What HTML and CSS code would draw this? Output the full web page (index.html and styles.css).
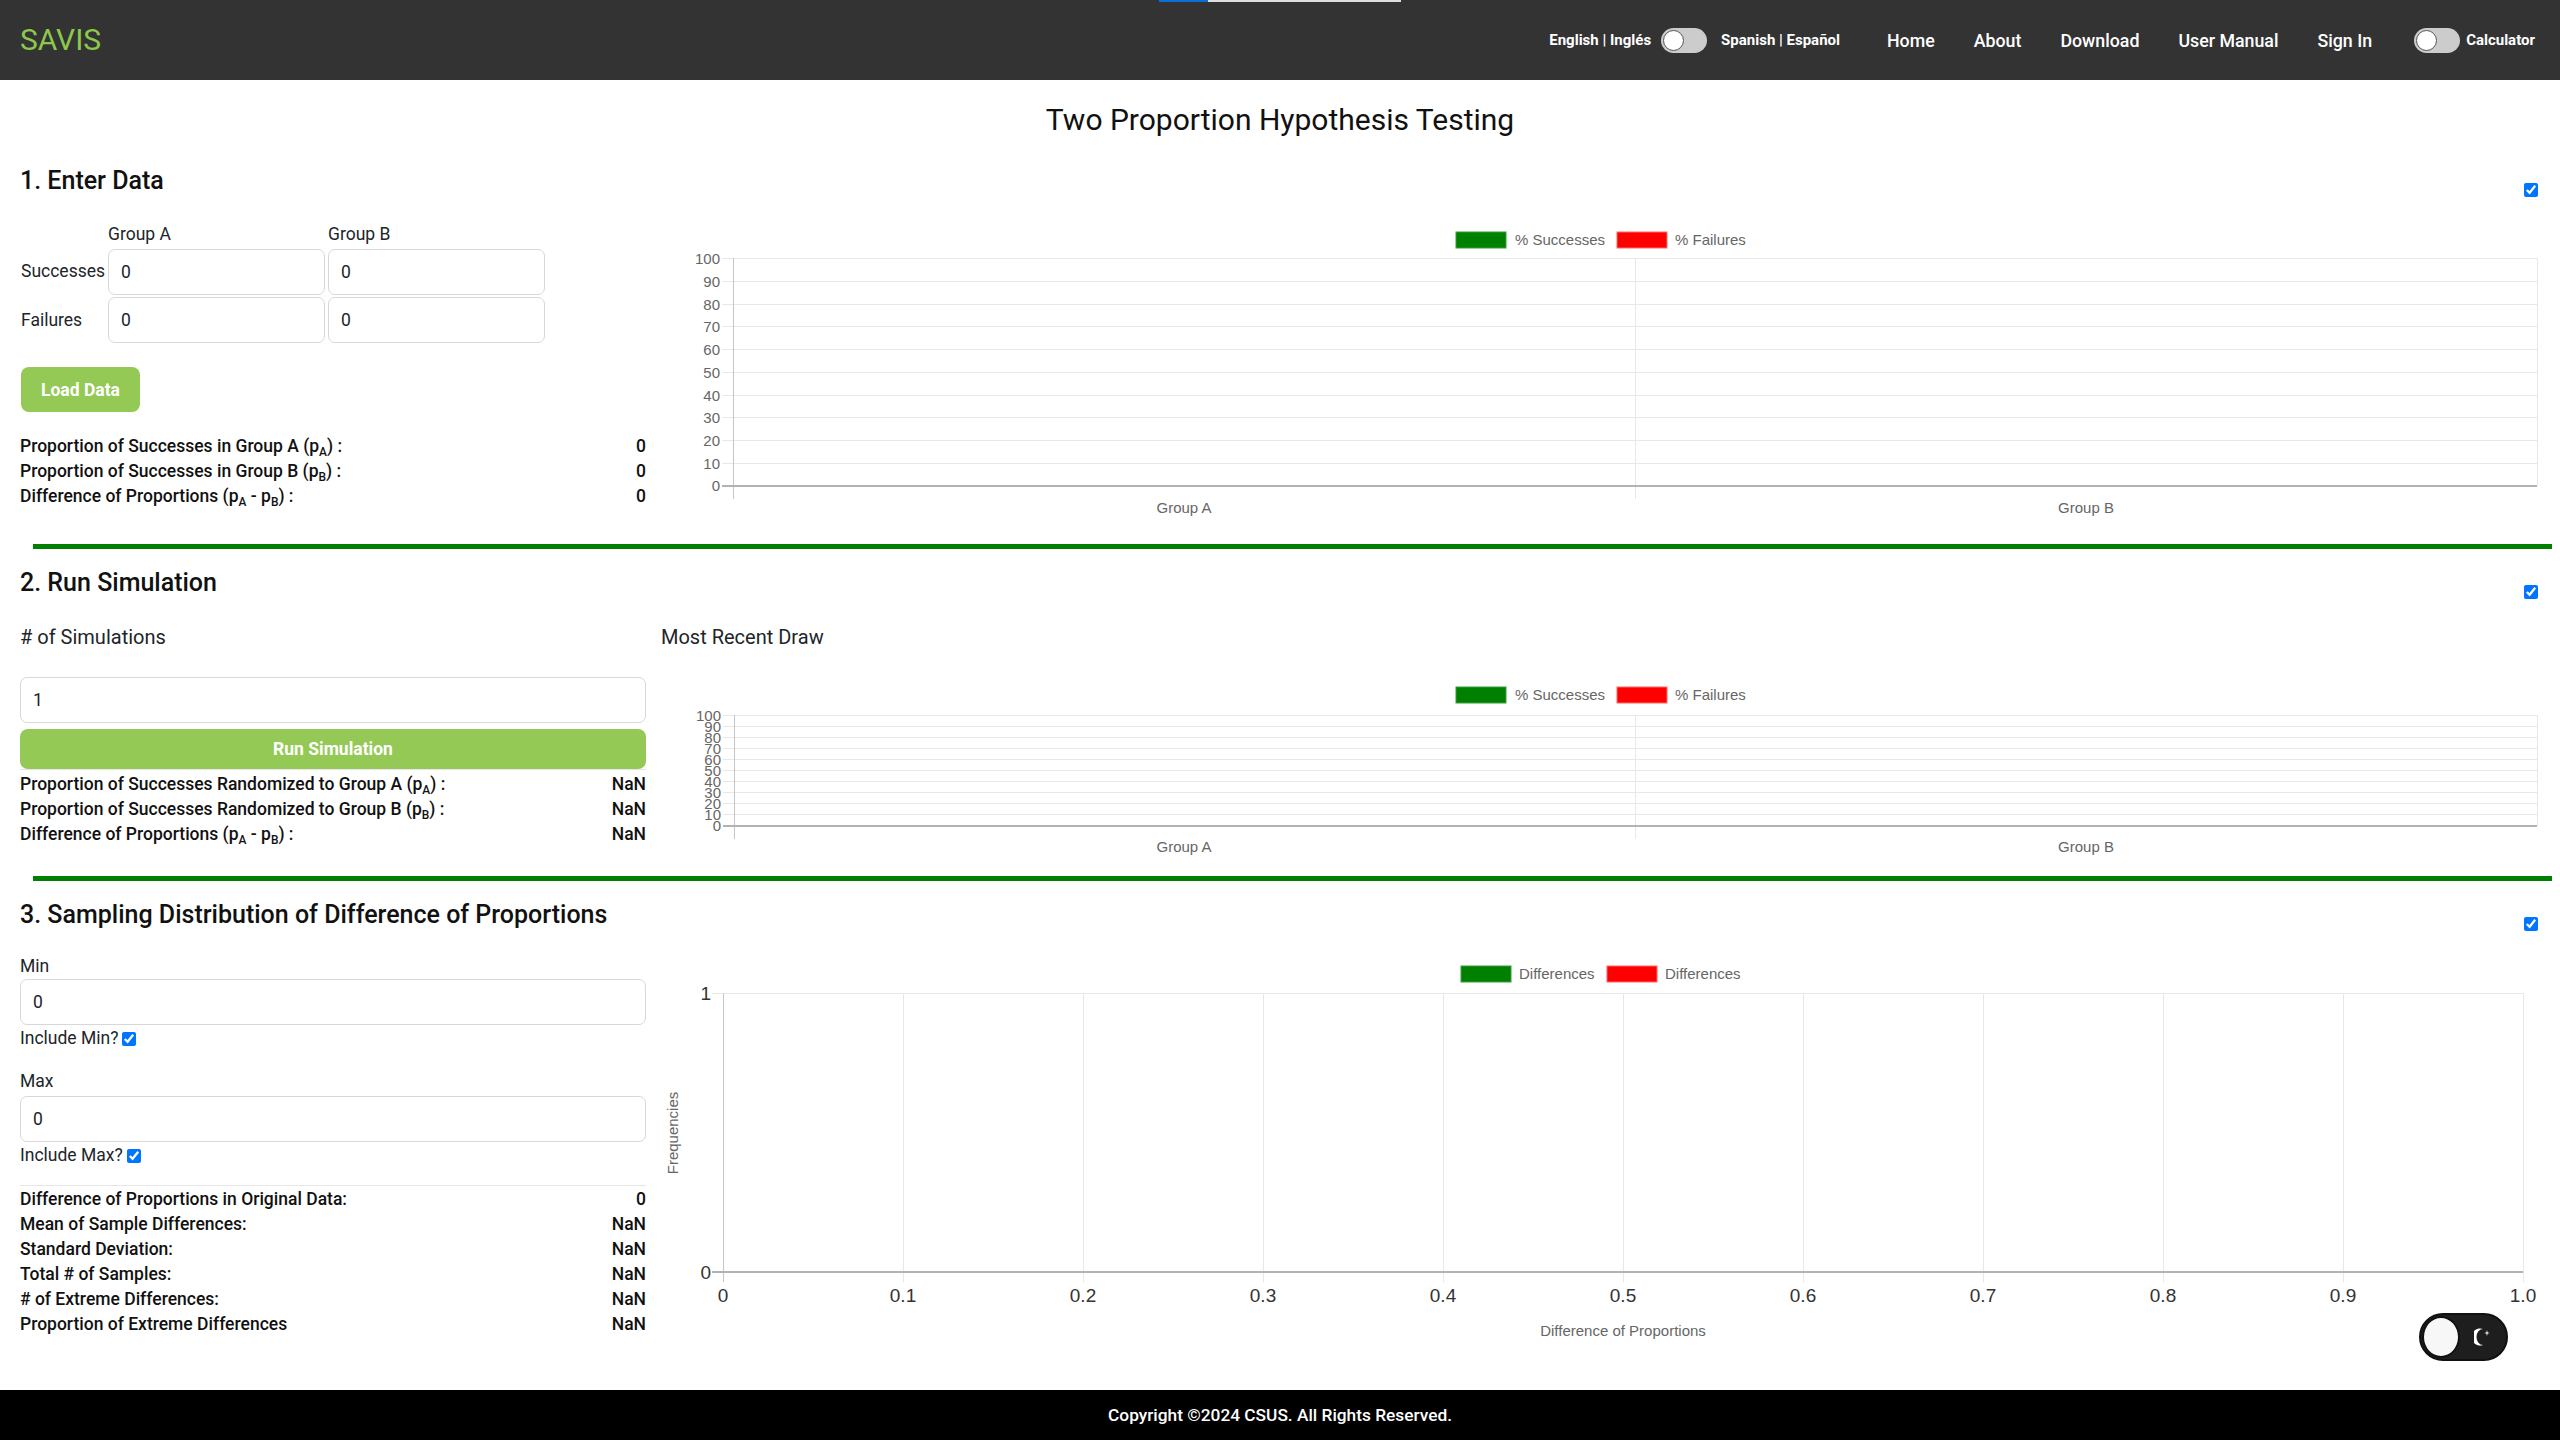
FILE: index.html
```html
<!DOCTYPE html>
<html lang="en">
<head>
<meta charset="utf-8">
<title>SAVIS - Two Proportion Hypothesis Testing</title>
<link rel="stylesheet" href="styles.css">
</head>
<body>
<div class="progress"><span class="progress-fill"></span></div>
<header class="navbar">
  <a class="brand" href="#">SAVIS</a>
  <nav class="nav">
    <span class="lang">English | Inglés</span>
    <span class="switch"><span class="knob"></span></span>
    <span class="lang lang-es">Spanish | Español</span>
    <a class="nav-link nav-link-first" href="#">Home</a>
    <a class="nav-link" href="#">About</a>
    <a class="nav-link" href="#">Download</a>
    <a class="nav-link" href="#">User Manual</a>
    <a class="nav-link" href="#">Sign In</a>
    <span class="switch switch-calc"><span class="knob"></span></span>
    <span class="lang calc">Calculator</span>
  </nav>
</header>

<main class="main">
  <h1 class="page-title">Two Proportion Hypothesis Testing</h1>

  <section class="section s1">
    <div class="section-head">
      <h2>1. Enter Data</h2>
      <input type="checkbox" class="check head-check" checked>
    </div>
    <div class="section-body">
      <div class="left">
        <div class="data-grid">
          <span></span>
          <span class="col-label">Group A</span>
          <span class="col-label">Group B</span>
          <span class="row-label">Successes</span>
          <input class="field" value="0">
          <input class="field" value="0">
          <span class="row-label">Failures</span>
          <input class="field" value="0">
          <input class="field" value="0">
        </div>
        <button class="btn btn-load">Load Data</button>
        <div class="stats stats-1">
          <div class="stat"><span>Proportion of Successes in Group A (p<sub>A</sub>) :</span><span>0</span></div>
          <div class="stat"><span>Proportion of Successes in Group B (p<sub>B</sub>) :</span><span>0</span></div>
          <div class="stat"><span>Difference of Proportions (p<sub>A</sub> - p<sub>B</sub>) :</span><span>0</span></div>
        </div>
      </div>
      <div class="right">
        <svg class="chart" width="1880" height="300" viewBox="0 0 1880 300">
          <rect class="lg-green" x="796" y="8" width="50" height="16"/>
          <text class="lg-text" x="855" y="21">% Successes</text>
          <rect class="lg-red" x="957" y="8" width="50" height="16"/>
          <text class="lg-text" x="1015" y="21">% Failures</text>
          <g class="grid">
            <line x1="62" y1="34.5" x2="1877" y2="34.5"/>
            <line x1="62" y1="57.5" x2="1877" y2="57.5"/>
            <line x1="62" y1="80.5" x2="1877" y2="80.5"/>
            <line x1="62" y1="102.5" x2="1877" y2="102.5"/>
            <line x1="62" y1="125.5" x2="1877" y2="125.5"/>
            <line x1="62" y1="148.5" x2="1877" y2="148.5"/>
            <line x1="62" y1="171.5" x2="1877" y2="171.5"/>
            <line x1="62" y1="193.5" x2="1877" y2="193.5"/>
            <line x1="62" y1="216.5" x2="1877" y2="216.5"/>
            <line x1="62" y1="239.5" x2="1877" y2="239.5"/>
            <line x1="975.5" y1="34" x2="975.5" y2="275"/>
            <line x1="1877.5" y1="34" x2="1877.5" y2="262"/>
          </g>
          <line class="axis" x1="73.5" y1="34" x2="73.5" y2="275"/>
          <line class="zero" x1="62" y1="262" x2="1877" y2="262"/>
          <g class="tick-label" text-anchor="end">
            <text x="60" y="39.5">100</text>
            <text x="60" y="62.5">90</text>
            <text x="60" y="85.5">80</text>
            <text x="60" y="107.5">70</text>
            <text x="60" y="130.5">60</text>
            <text x="60" y="153.5">50</text>
            <text x="60" y="176.5">40</text>
            <text x="60" y="198.5">30</text>
            <text x="60" y="221.5">20</text>
            <text x="60" y="244.5">10</text>
            <text x="60" y="267">0</text>
          </g>
          <g class="tick-label" text-anchor="middle">
            <text x="524" y="289">Group A</text>
            <text x="1426" y="289">Group B</text>
          </g>
        </svg>
      </div>
    </div>
  </section>

  <hr class="divider divider-1">

  <section class="section s2">
    <div class="section-head">
      <h2>2. Run Simulation</h2>
      <input type="checkbox" class="check head-check" checked>
    </div>
    <div class="section-body">
      <div class="left">
        <div class="label label-lg">&#35; of Simulations</div>
        <input class="field field-sims" value="1">
        <button class="btn btn-run">Run Simulation</button>
        <div class="rule"></div>
        <div class="stats stats-2">
          <div class="stat"><span>Proportion of Successes Randomized to Group A (p<sub>A</sub>) :</span><span>NaN</span></div>
          <div class="stat"><span>Proportion of Successes Randomized to Group B (p<sub>B</sub>) :</span><span>NaN</span></div>
          <div class="stat"><span>Difference of Proportions (p<sub>A</sub> - p<sub>B</sub>) :</span><span>NaN</span></div>
        </div>
      </div>
      <div class="right">
        <div class="label label-lg label-draw">Most Recent Draw</div>
        <svg class="chart chart-2" width="1880" height="185" viewBox="0 0 1880 185">
          <rect class="lg-green" x="796" y="12" width="50" height="16"/>
          <text class="lg-text" x="855" y="25">% Successes</text>
          <rect class="lg-red" x="957" y="12" width="50" height="16"/>
          <text class="lg-text" x="1015" y="25">% Failures</text>
          <g class="grid">
            <line x1="63" y1="40.5" x2="1877" y2="40.5"/>
            <line x1="63" y1="51.5" x2="1877" y2="51.5"/>
            <line x1="63" y1="62.5" x2="1877" y2="62.5"/>
            <line x1="63" y1="73.5" x2="1877" y2="73.5"/>
            <line x1="63" y1="84.5" x2="1877" y2="84.5"/>
            <line x1="63" y1="95.5" x2="1877" y2="95.5"/>
            <line x1="63" y1="106.5" x2="1877" y2="106.5"/>
            <line x1="63" y1="117.5" x2="1877" y2="117.5"/>
            <line x1="63" y1="128.5" x2="1877" y2="128.5"/>
            <line x1="63" y1="139.5" x2="1877" y2="139.5"/>
            <line x1="975.5" y1="40" x2="975.5" y2="164"/>
            <line x1="1877.5" y1="40" x2="1877.5" y2="151"/>
          </g>
          <line class="axis" x1="74.5" y1="40" x2="74.5" y2="164"/>
          <line class="zero" x1="63" y1="151" x2="1877" y2="151"/>
          <g class="tick-label" text-anchor="end">
            <text x="61" y="45.5">100</text>
            <text x="61" y="56.5">90</text>
            <text x="61" y="67.5">80</text>
            <text x="61" y="78.5">70</text>
            <text x="61" y="89.5">60</text>
            <text x="61" y="100.5">50</text>
            <text x="61" y="111.5">40</text>
            <text x="61" y="122.5">30</text>
            <text x="61" y="133.5">20</text>
            <text x="61" y="144.5">10</text>
            <text x="61" y="156">0</text>
          </g>
          <g class="tick-label" text-anchor="middle">
            <text x="524" y="177">Group A</text>
            <text x="1426" y="177">Group B</text>
          </g>
        </svg>
      </div>
    </div>
  </section>

  <hr class="divider divider-2">

  <section class="section s3">
    <div class="section-head">
      <h2>3. Sampling Distribution of Difference of Proportions</h2>
      <input type="checkbox" class="check head-check" checked>
    </div>
    <div class="section-body">
      <div class="left">
        <div class="label">Min</div>
        <input class="field field-min" value="0">
        <label class="inc inc-min">Include Min? <input type="checkbox" class="check" checked></label>
        <div class="label label-max">Max</div>
        <input class="field field-max" value="0">
        <label class="inc">Include Max? <input type="checkbox" class="check" checked></label>
        <div class="rule rule-3"></div>
        <div class="stats stats-3">
          <div class="stat"><span>Difference of Proportions in Original Data:</span><span>0</span></div>
          <div class="stat"><span>Mean of Sample Differences:</span><span>NaN</span></div>
          <div class="stat"><span>Standard Deviation:</span><span>NaN</span></div>
          <div class="stat"><span>Total &#35; of Samples:</span><span>NaN</span></div>
          <div class="stat"><span>&#35; of Extreme Differences:</span><span>NaN</span></div>
          <div class="stat"><span>Proportion of Extreme Differences</span><span>NaN</span></div>
        </div>
      </div>
      <div class="right">
        <svg class="chart" width="1880" height="390" viewBox="0 0 1880 390">
          <rect class="lg-green" x="801" y="10" width="50" height="16"/>
          <text class="lg-text" x="859" y="23">Differences</text>
          <rect class="lg-red" x="947" y="10" width="50" height="16"/>
          <text class="lg-text" x="1005" y="23">Differences</text>
          <g class="grid">
            <line x1="52" y1="37.5" x2="1863" y2="37.5"/>
            <line x1="243.5" y1="37" x2="243.5" y2="326"/>
            <line x1="423.5" y1="37" x2="423.5" y2="326"/>
            <line x1="603.5" y1="37" x2="603.5" y2="326"/>
            <line x1="783.5" y1="37" x2="783.5" y2="326"/>
            <line x1="963.5" y1="37" x2="963.5" y2="326"/>
            <line x1="1143.5" y1="37" x2="1143.5" y2="326"/>
            <line x1="1323.5" y1="37" x2="1323.5" y2="326"/>
            <line x1="1503.5" y1="37" x2="1503.5" y2="326"/>
            <line x1="1683.5" y1="37" x2="1683.5" y2="326"/>
            <line x1="1863.5" y1="37" x2="1863.5" y2="326"/>
          </g>
          <line class="axis" x1="63.5" y1="37" x2="63.5" y2="326"/>
          <line class="zero" x1="52" y1="316" x2="1863" y2="316"/>
          <g class="tick-big" text-anchor="end">
            <text x="51" y="44">1</text>
            <text x="51" y="323">0</text>
          </g>
          <g class="tick-big" text-anchor="middle">
            <text x="63" y="346">0</text>
            <text x="243" y="346">0.1</text>
            <text x="423" y="346">0.2</text>
            <text x="603" y="346">0.3</text>
            <text x="783" y="346">0.4</text>
            <text x="963" y="346">0.5</text>
            <text x="1143" y="346">0.6</text>
            <text x="1323" y="346">0.7</text>
            <text x="1503" y="346">0.8</text>
            <text x="1683" y="346">0.9</text>
            <text x="1863" y="346">1.0</text>
          </g>
          <text class="tick-label" text-anchor="middle" transform="translate(18 177) rotate(-90)">Frequencies</text>
          <text class="tick-label" text-anchor="middle" x="963" y="380">Difference of Proportions</text>
        </svg>
      </div>
    </div>
  </section>
</main>

<footer class="footer">Copyright ©2024 CSUS. All Rights Reserved.</footer>

<div class="theme-toggle">
  <span class="theme-knob"></span>
  <svg class="moon" width="16" height="22" viewBox="0 0 16 22">
    <path d="M9 3 A8.5 8.5 0 1 0 9 19 A6.5 8 0 0 1 9 3 Z" fill="#fff"/>
    <path d="M13 4 L13.6 6.4 L16 7 L13.6 7.6 L13 10 L12.4 7.6 L10 7 L12.4 6.4 Z" fill="#fff"/>
  </svg>
</div>
</body>
</html>
```

FILE: styles.css
```css
* { box-sizing: border-box; }

html, body { margin: 0; padding: 0; }

body {
  font-family: Roboto, "Noto Sans", "Liberation Sans", Arial, sans-serif;
  font-size: 17.5px;
  line-height: 21px;
  color: #212529;
  background: #fff;
  min-height: 100vh;
  display: flex;
  flex-direction: column;
}

/* top loading indicator over the navbar */
.progress {
  position: absolute;
  top: 0;
  left: 1159px;
  width: 242px;
  height: 2px;
  background: #dedede;
  z-index: 5;
}
.progress-fill {
  display: block;
  width: 49px;
  height: 100%;
  background: #0b6fd6;
}

/* navbar */
.navbar {
  flex: none;
  height: 80px;
  background: #333333;
  display: flex;
  align-items: center;
  justify-content: space-between;
  padding: 0 25px 0 20px;
}
.brand {
  color: #8cc84b;
  font-size: 30px;
  font-weight: 400;
  text-decoration: none;
  line-height: 1;
}
.nav {
  display: flex;
  align-items: center;
}
.lang {
  color: #fff;
  font-size: 15px;
  font-weight: 700;
}
.lang-es { margin-left: 14px; }
.calc { margin-left: 6px; font-size: 15px; }
.switch {
  position: relative;
  display: inline-block;
  width: 46px;
  height: 25px;
  border-radius: 13px;
  background: #cccccc;
  margin-left: 10px;
}
.knob {
  position: absolute;
  left: 2px;
  top: 2px;
  width: 21px;
  height: 21px;
  border-radius: 50%;
  background: #fff;
  border: 1px solid #555;
}
.switch-calc { margin-left: 42px; }
.nav-link {
  color: #fff;
  font-size: 17.8px;
  font-weight: 500;
  text-decoration: none;
  margin-left: 39px;
}
.nav-link-first { margin-left: 47px; }

/* main */
.main {
  flex: 1;
  padding: 0 20px;
}
.page-title {
  margin: 22px 0 0;
  font-size: 30px;
  line-height: 35px;
  font-weight: 400;
  text-align: center;
  color: #111;
}

.section-head {
  display: flex;
  justify-content: space-between;
  align-items: flex-end;
  height: 29px;
}
.section-head h2 {
  margin: 0;
  font-size: 25px;
  line-height: 29px;
  font-weight: 500;
  color: #111;
}
.s1 .section-head { margin-top: 29px; }
.s2 .section-head,
.s3 .section-head { margin-top: 19px; }

.check {
  width: 14px;
  height: 14px;
  margin: 0;
  accent-color: #0075ff;
}
.head-check {
  margin-right: 2px;
  margin-bottom: -2px;
}

.section-body {
  display: flex;
  align-items: flex-start;
}
.s1 .section-body { margin-top: 29px; }
.s2 .section-body { margin-top: 30px; }
.s3 .section-body { margin-top: 27px; }

.left {
  width: 626px;
  flex: none;
  display: flex;
  flex-direction: column;
}
.right {
  flex: 1;
  margin-left: 14px;
}

/* section 1 data grid */
.data-grid {
  display: grid;
  grid-template-columns: 85px 217px 217px;
  grid-template-rows: 21px 46px 46px;
  column-gap: 3px;
  row-gap: 3px;
  align-items: center;
}
.data-grid .col-label { align-self: start; }
.data-grid .field:nth-of-type(1),
.data-grid .field:nth-of-type(2) { margin-top: 1px; }
.row-label { padding-left: 1px; }

.field {
  display: block;
  width: 100%;
  height: 46px;
  border: 1px solid #d8d8d8;
  border-radius: 7px;
  padding: 0 12px;
  font: inherit;
  color: #212529;
  background: #fff;
}

.btn {
  border: 0;
  background: #93c954;
  color: #fff;
  font-family: inherit;
  font-size: 17.5px;
  font-weight: 700;
  border-radius: 8px;
  cursor: pointer;
}
.btn-load {
  align-self: flex-start;
  height: 45px;
  padding: 0 20px;
  margin-top: 24px;
  margin-left: 1px;
}
.btn-run {
  height: 40px;
  margin-top: 6px;
  width: 100%;
}

.stats { display: flex; flex-direction: column; }
.stats-1 { margin-top: 22px; }
.stats-2 { margin-top: 1.5px; }
.stats-3 { margin-top: 0.5px; }
.stat {
  display: flex;
  justify-content: space-between;
  height: 25px;
  line-height: 25px;
  font-weight: 500;
  color: #111;
}
.stat sub {
  font-size: 0.68em;
  line-height: 0;
  vertical-align: -0.3em;
}

.rule {
  height: 1px;
  background: #e6e6e6;
}
.rule-3 { margin-top: 19px; }

.label { line-height: 21px; }
.label-lg { font-size: 20px; }
.label-draw { padding-left: 1px; }
.field-sims { margin-top: 29px; }
.field-min { margin-top: 2px; }
.label-max { margin-top: 22px; }
.field-max { margin-top: 4px; }
.inc {
  display: flex;
  align-items: center;
  gap: 4px;
  margin-top: 3px;
  line-height: 21px;
}

/* charts */
.chart { display: block; }
.chart-2 { margin-top: 27px; }
.grid line { stroke: #e8e8e8; stroke-width: 1; }
.axis { stroke: #c6c6c6; stroke-width: 1; }
.zero { stroke: #b3b3b3; stroke-width: 2; }
.lg-green { fill: #008000; stroke: #3d9a3d; stroke-width: 1; }
.lg-red { fill: #ff0000; stroke: #ff6a6a; stroke-width: 1; }
.lg-text,
.tick-label {
  font-family: "Liberation Sans", Arial, sans-serif;
  font-size: 15px;
  fill: #666;
}
.tick-big {
  font-family: "Liberation Sans", Arial, sans-serif;
  font-size: 19px;
  fill: #333;
}

/* dividers */
.divider {
  border: 0;
  height: 5px;
  background: #008000;
  margin: 0 -12px 0 13px;
}
.divider-1 { margin-top: 20px; }
.divider-2 { margin-top: 16px; }

/* footer */
.footer {
  flex: none;
  height: 50px;
  background: #000;
  color: #fff;
  display: flex;
  align-items: center;
  justify-content: center;
  font-size: 17.3px;
  font-weight: 500;
}

/* floating dark-mode toggle */
.theme-toggle {
  position: fixed;
  right: 52px;
  bottom: 79px;
  width: 89px;
  height: 48px;
  border-radius: 24px;
  background: #1e1e1e;
  border: 2px solid #111;
  display: flex;
  align-items: center;
  justify-content: space-between;
  padding: 0 16px 0 1px;
}
.theme-knob {
  width: 38px;
  height: 42px;
  border-radius: 50%;
  background: #f7f7f7;
  border: 2px solid #111;
}
.moon { display: block; }
```
